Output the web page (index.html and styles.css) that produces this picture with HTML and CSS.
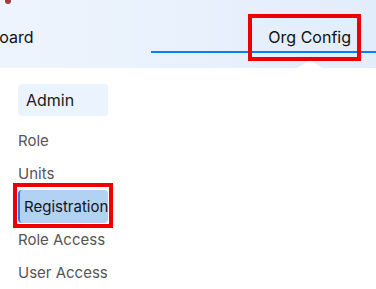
FILE: index.html
```html
<!DOCTYPE html>
<html>
<head>
<meta charset="utf-8">
<link rel="stylesheet" href="styles.css">
</head>
<body>
<header class="topbar">
  <span class="dot"></span>
  <div class="tab tab-first">Dashboard</div>
  <div class="track">
    <div class="tab tab-active">Org Config</div>
  </div>
  <span class="mark mark-tab"></span>
</header>
<aside class="side">
  <div class="group">Admin</div>
  <ul class="menu">
    <li class="item">Role</li>
    <li class="item">Units</li>
    <li class="item item-active"><span class="pill">Registration</span></li>
    <li class="item">Role Access</li>
    <li class="item">User Access</li>
  </ul>
  <span class="mark mark-reg"></span>
</aside>
</body>
</html>
```
FILE: styles.css
```css
html, body {
  margin: 0;
  padding: 0;
  background: #ffffff;
  font-family: Inter, "Noto Sans", sans-serif;
  overflow: hidden;
}
.topbar {
  position: relative;
  height: 68px;
  display: flex;
  align-items: flex-start;
  background: linear-gradient(90deg, #eef4fd 0%, #e8f1fc 50%, #e2edfb 100%);
}
.dot {
  position: absolute;
  left: 5px;
  top: -2px;
  width: 6px;
  height: 6px;
  border-radius: 50%;
  background: #a53a3a;
}
.tab {
  font-size: 16px;
  color: #111111;
  white-space: nowrap;
}
.tab-first {
  margin-left: -49px;
  padding-top: 27px;
  width: 200px;
}
.track {
  flex: 1;
  height: 51px;
  border-bottom: 2px solid #0a7cf5;
  display: flex;
  justify-content: flex-end;
  padding-right: 25px;
}
.tab-active {
  position: relative;
  padding-top: 27px;
}
.tab-active::after {
  content: "";
  position: absolute;
  left: 28px;
  top: 60px;
  width: 0;
  height: 0;
  border-left: 14px solid transparent;
  border-right: 14px solid transparent;
  border-bottom: 9px solid #ffffff;
}
.mark {
  position: absolute;
  border: 4px solid #ee0000;
  box-sizing: border-box;
  z-index: 2;
}
.mark-tab {
  left: 248px;
  top: 14px;
  width: 113px;
  height: 47px;
}
.side {
  position: relative;
  padding: 16px 0 0 18px;
}
.group {
  width: 90px;
  height: 32px;
  box-sizing: border-box;
  padding-left: 8px;
  display: flex;
  align-items: center;
  background: #ebf3fe;
  border-radius: 4px;
  font-size: 16px;
  color: #1a1a1a;
}
.menu {
  list-style: none;
  margin: 8px 0 0 0;
  padding: 0;
}
.item {
  height: 33px;
  display: flex;
  align-items: center;
  font-size: 15px;
  color: #555555;
  white-space: nowrap;
}
.pill {
  width: 90px;
  height: 33px;
  box-sizing: border-box;
  padding-left: 4px;
  display: flex;
  align-items: center;
  background: #b1d2f3;
  border-left: 2px solid #1a7ff0;
  border-radius: 4px;
  color: #151515;
}
.mark-reg {
  left: 13px;
  top: 115px;
  width: 100px;
  height: 45px;
}
```
